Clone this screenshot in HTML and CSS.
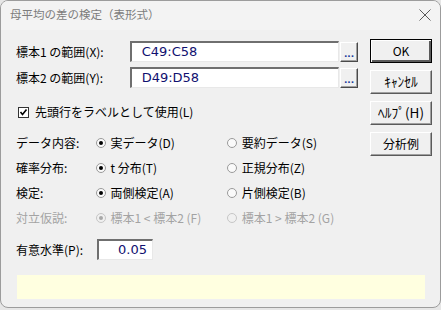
FILE: index.html
```
<!DOCTYPE html>
<html lang="ja">
<head>
  <meta charset="UTF-8">
  <title>母平均の差の検定（表形式）</title>
  <link rel="stylesheet" href="styles.css">
</head>
<body>
  <div class="window">
    <!-- タイトルバー -->
    <div class="titlebar">
      <span class="title">母平均の差の検定（表形式）</span>
      <svg class="close" width="12" height="12" viewBox="0 0 12 12">
        <path d="M0.5 0.5 L11.5 11.5 M11.5 0.5 L0.5 11.5" stroke="#5a5a5a" stroke-width="1" fill="none"/>
      </svg>
    </div>

    <div class="content">
      <div class="top">
        <div class="form">
          <div class="range-row">
            <label class="range-label">標本1 の範囲(X):</label>
            <div class="textbox">C49:C58</div>
            <button class="browse">...</button>
          </div>
          <div class="range-row second">
            <label class="range-label">標本2 の範囲(Y):</label>
            <div class="textbox">D49:D58</div>
            <button class="browse">...</button>
          </div>

          <div class="check-row">
            <span class="checkbox">
              <svg width="9" height="9" viewBox="0 0 9 9">
                <path d="M1.5 4 L3.5 6.5 L7.5 1.5" stroke="#000" stroke-width="1.6" fill="none"/>
              </svg>
            </span>
            <span>先頭行をラベルとして使用(L)</span>
          </div>

          <div class="options">
            <div class="opt-row">
              <span class="opt-label">データ内容:</span>
              <span class="opt"><span class="radio on"></span>実データ(D)</span>
              <span class="opt"><span class="radio"></span>要約データ(S)</span>
            </div>
            <div class="opt-row">
              <span class="opt-label">確率分布:</span>
              <span class="opt"><span class="radio on"></span>t 分布(T)</span>
              <span class="opt"><span class="radio"></span>正規分布(Z)</span>
            </div>
            <div class="opt-row">
              <span class="opt-label">検定:</span>
              <span class="opt"><span class="radio on"></span>両側検定(A)</span>
              <span class="opt"><span class="radio"></span>片側検定(B)</span>
            </div>
            <div class="opt-row disabled">
              <span class="opt-label">対立仮説:</span>
              <span class="opt"><span class="radio on"></span>標本1 &lt; 標本2 (F)</span>
              <span class="opt"><span class="radio"></span>標本1 &gt; 標本2 (G)</span>
            </div>
          </div>
        </div>

        <div class="buttons">
          <button class="btn default">OK</button>
          <button class="btn kana">ｷｬﾝｾﾙ</button>
          <button class="btn kana">ﾍﾙﾌﾟ(H)</button>
          <button class="btn">分析例</button>
        </div>
      </div>

      <div class="alpha-row">
        <label class="alpha-label">有意水準(P):</label>
        <div class="textbox alpha">0.05</div>
      </div>

      <div class="status"></div>
    </div>
  </div>
</body>
</html>
```

FILE: styles.css
```
* {
  box-sizing: border-box;
}

body {
  margin: 0;
  background: #e6e6e6;
  font-family: "Noto Sans CJK JP", sans-serif;
  font-size: 12px;
  color: #000;
}

.window {
  width: 441px;
  height: 308px;
  border: 1px solid #9c9c9c;
  border-radius: 8px;
  overflow: hidden;
  background: #f0f0f0;
}

.titlebar {
  height: 29px;
  background: #f3f3f3;
  display: flex;
  align-items: center;
  justify-content: space-between;
  padding: 0 9px 0 9px;
}

.title {
  font-size: 11.5px;
  color: #7c7c7c;
  line-height: 1;
  margin-top: -1px;
}

.close {
  margin-top: -1px;
}

.content {
  padding: 0 9px 0 15px;
}

.top {
  display: flex;
}

.form {
  width: 342px;
  display: flex;
  flex-direction: column;
}

.range-row {
  display: flex;
  align-items: center;
  height: 21px;
  margin-top: 11px;
}

.range-row.second {
  margin-top: 5px;
}

.range-label {
  width: 114px;
  line-height: 1;
}

.textbox {
  height: 21px;
  background: #fff;
  border-style: solid;
  border-width: 2px 1px 1px 2px;
  border-color: #6f6f6f #e8e8e8 #e8e8e8 #6f6f6f;
  font-family: "DejaVu Sans", sans-serif;
  font-size: 13px;
  color: #101070;
  line-height: 18px;
}

.range-row .textbox {
  width: 210px;
  padding-left: 10px;
}

.browse {
  width: 18px;
  height: 20px;
  margin-left: 1px;
  padding: 0;
  background: #f0f0f0;
  border-style: solid;
  border-width: 1px;
  border-color: #fff #4a4a4a #4a4a4a #fff;
  box-shadow: inset -1px -1px 0 #a0a0a0;
  font-family: "DejaVu Sans", sans-serif;
  font-size: 9px;
  font-weight: bold;
  color: #1c3c9c;
  line-height: 1;
  padding-top: 5px;
}

.check-row {
  display: flex;
  align-items: center;
  height: 14px;
  margin-top: 17px;
  padding-left: 2px;
  line-height: 1;
}

.checkbox {
  width: 11px;
  height: 11px;
  border: 1px solid #333;
  background: #fff;
  display: flex;
  align-items: center;
  justify-content: center;
  margin-right: 6px;
}

.options {
  margin-top: 11px;
}

.opt-row {
  display: flex;
  align-items: center;
  height: 25px;
  line-height: 1;
}

.opt-label {
  width: 83px;
}

.opt {
  display: flex;
  align-items: center;
  width: 137px;
}

.radio {
  width: 10px;
  height: 10px;
  border-radius: 50%;
  border: 1px solid #9a9a9a;
  background: #fafafa;
  margin-right: 5px;
  display: flex;
  align-items: center;
  justify-content: center;
}

.radio.on::after {
  content: "";
  width: 4px;
  height: 4px;
  border-radius: 50%;
  background: #000;
}

.opt-row.disabled {
  color: #a3a3a3;
}

.opt-row.disabled .radio {
  border-color: #c6c6c6;
  background: #f0f0f0;
}

.opt-row.disabled .radio.on::after {
  background: #a8a8a8;
}

.buttons {
  display: flex;
  flex-direction: column;
  margin-left: 12px;
  margin-top: 9px;
  gap: 7px;
}

.btn {
  width: 62px;
  height: 24px;
  padding: 0;
  background: #f0f0f0;
  font-family: "Noto Sans CJK JP", sans-serif;
  font-size: 12px;
  font-weight: 400;
  color: #000;
  line-height: 1;
  border-style: solid;
  border-width: 1px;
  border-color: #fff #5a5a5a #5a5a5a #fff;
  box-shadow: inset -1px -1px 0 #a0a0a0;
}

.btn.kana {
  font-size: 13.5px;
}

.btn.default {
  border: 1px solid #000;
  box-shadow: inset 1px 1px 0 #fff, inset -2px -2px 0 #5a5a5a;
}

.alpha-row {
  display: flex;
  align-items: center;
  height: 21px;
  margin-top: 9px;
}

.alpha-label {
  width: 81px;
  line-height: 1;
}

.textbox.alpha {
  width: 56px;
  text-align: right;
  padding-right: 5px;
}

.status {
  height: 24px;
  margin-top: 15px;
  margin-left: 1px;
  width: 408px;
  background: #ffffe0;
}
```
